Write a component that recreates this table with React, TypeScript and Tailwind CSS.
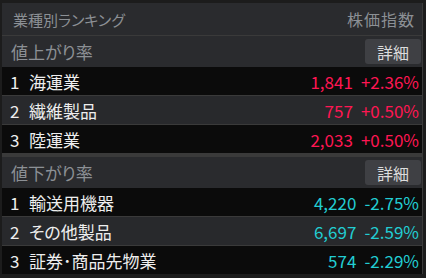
import React from "react";

type Row = { rank: number; name: string; price: string; pct: string };

const up: Row[] = [
  { rank: 1, name: "海運業", price: "1,841", pct: "+2.36%" },
  { rank: 2, name: "繊維製品", price: "757", pct: "+0.50%" },
  { rank: 3, name: "陸運業", price: "2,033", pct: "+0.50%" },
];

const down: Row[] = [
  { rank: 1, name: "輸送用機器", price: "4,220", pct: "-2.75%" },
  { rank: 2, name: "その他製品", price: "6,697", pct: "-2.59%" },
  { rank: 3, name: "証券･商品先物業", price: "574", pct: "-2.29%" },
];

function Section({ title, rows, color }: { title: string; rows: Row[]; color: string }) {
  return (
    <div className="flex flex-col">
      <div className="flex h-[31px] items-center justify-between bg-[#2a2b2e] pl-[9px] pr-[1px]">
        <span className="text-[17px] text-[#8c9095]">{title}</span>
        <button className="flex h-[25px] w-[56px] items-center justify-center rounded-[3px] bg-[#3f4044] text-[16px] text-[#dcdcdc]">
          詳細
        </button>
      </div>
      {rows.map((r, i) => (
        <div
          key={r.rank}
          className={
            "flex items-center justify-between pl-[8px] pr-[3px] " +
            (i % 2 === 1 ? "bg-[#28292c]" : "bg-[#0b0b0b]") +
            (i < rows.length - 1 ? " h-[29px] border-b border-[#3a3a3a]" : " h-[28px]")
          }
        >
          <div className="flex items-center text-[17px] text-[#eeeeee]">
            <span className="w-[19px]">{r.rank}</span>
            <span>{r.name}</span>
          </div>
          <div className={"flex items-center text-[17px] " + color}>
            <span>{r.price}</span>
            <span className="ml-[8px]">{r.pct}</span>
          </div>
        </div>
      ))}
    </div>
  );
}

export default function App() {
  return (
    <div
      className="h-[278px] w-[426px] bg-[#1c1c1c] pb-[4px] pl-[2px] pr-[3px] pt-[3px] leading-none [font-feature-settings:'palt']"
      style={{ fontFamily: '"Noto Sans CJK JP", "Noto Sans", sans-serif' }}
    >
      <div className="flex h-full flex-col border-r border-[#3a3a3a]">
        <div className="flex h-[33px] items-center justify-between border-b border-[#3a3a3a] bg-[#2a2b2e] pl-[11px] pr-[7px]">
          <span className="text-[15px] text-[#8c9095]">業種別ランキング</span>
          <span className="text-[16px] tracking-[1px] text-[#8c9095]">株価指数</span>
        </div>
        <Section title="値上がり率" rows={up} color="text-[#ff1653]" />
        <div className="h-[4px] bg-[#3a3a3a]" />
        <Section title="値下がり率" rows={down} color="text-[#22cdd3]" />
      </div>
    </div>
  );
}
